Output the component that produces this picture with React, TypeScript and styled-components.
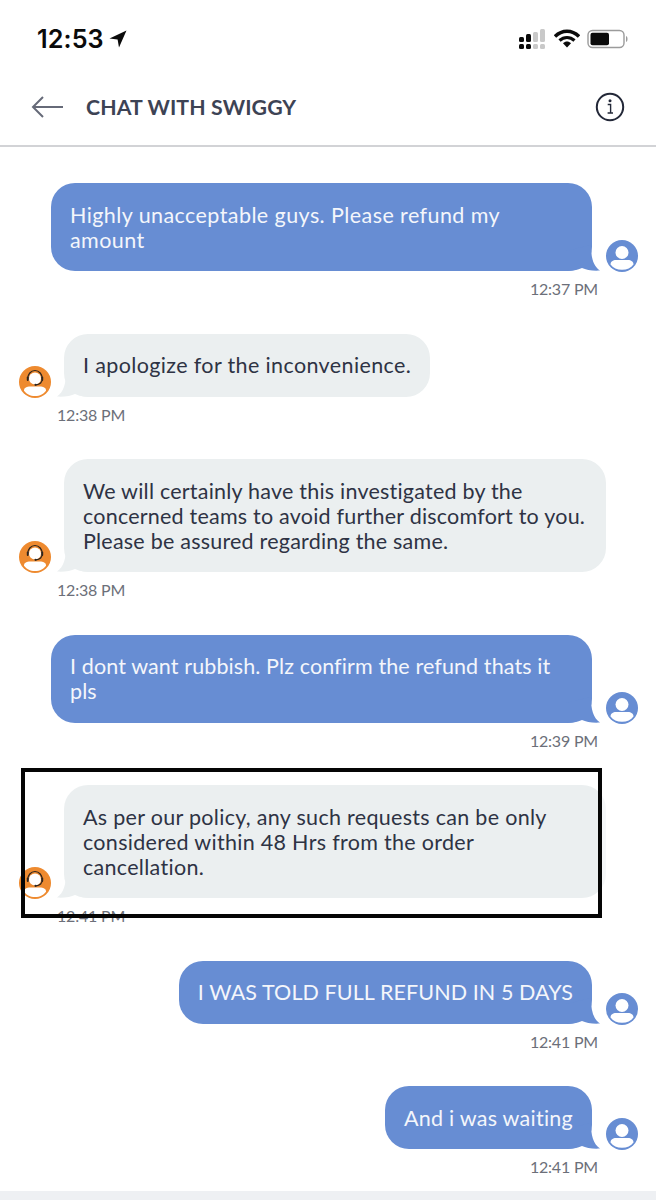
import React from "react";
import styled, { createGlobalStyle } from "styled-components";

const Global = createGlobalStyle`
  html, body { margin: 0; padding: 0; background: #fff; }
  body { font-family: Lato, "Noto Sans", sans-serif; color: #2e3344; }
  #root { width: 656px; height: 1200px; overflow: hidden; }
`;

const Page = styled.div`
  width: 656px;
  height: 1200px;
  display: flex;
  flex-direction: column;
  overflow: hidden;
  background: #fff;
`;

const StatusBar = styled.div`
  height: 76px;
  box-sizing: border-box;
  padding: 24px 27px 0 37px;
  display: flex;
  align-items: flex-start;
  justify-content: space-between;
`;

const Clock = styled.div`
  display: flex;
  align-items: center;
  gap: 5px;
  font-family: Inter, sans-serif;
  font-weight: 600;
  font-size: 25.2px;
  line-height: 30px;
  letter-spacing: 0.1px;
  color: #0b0b0b;
`;

const StatusIcons = styled.div`
  display: flex;
  align-items: center;
  gap: 7px;
  height: 30px;
`;

const Header = styled.header`
  height: 71px;
  box-sizing: border-box;
  border-bottom: 2px solid #d2d3d6;
  padding: 0 31px 8px 31px;
  display: flex;
  align-items: center;
`;

const Title = styled.h1`
  margin: 0 0 0 22px;
  flex: 1;
  font-size: 21.3px;
  font-weight: 700;
  color: #3d4354;
  letter-spacing: 0.1px;
`;

const Thread = styled.main`
  flex: 1;
  display: flex;
  flex-direction: column;
  gap: 35.5px;
  padding: 36px 18px 0 19px;
`;

const Message = styled.section<{ $mine?: boolean }>`
  position: relative;
  display: flex;
  flex-direction: column;
  align-items: ${(p) => (p.$mine ? "flex-end" : "flex-start")};
`;

const Row = styled.div<{ $mine?: boolean }>`
  display: flex;
  align-items: flex-end;
  flex-direction: ${(p) => (p.$mine ? "row" : "row-reverse")};
  gap: ${(p) => (p.$mine ? "14px" : "13px")};
`;

const Bubble = styled.div<{ $mine?: boolean; $boxed?: boolean; $tracking: number }>`
  position: relative;
  box-sizing: border-box;
  max-width: ${(p) => (p.$mine ? "541px" : "542px")};
  padding: 19.5px 19px 18.5px;
  border-radius: 24px;
  font-size: 21.5px;
  line-height: 25px;
  letter-spacing: ${(p) => p.$tracking}px;
  background: ${(p) =>
    p.$mine
      ? "#678dd3"
      : p.$boxed
      ? "linear-gradient(90deg, #ebeff0 calc(100% - 4px), #f5f7f8 0)"
      : "#ebeff0"};
  color: ${(p) => (p.$mine ? "#f4f6fb" : "#2e3344")};
`;

const BubbleText = styled.span`
  position: relative;
`;

const Tail = styled.svg<{ $mine?: boolean }>`
  position: absolute;
  bottom: 0;
  ${(p) => (p.$mine ? "right: -8px;" : "left: -7px; transform: scaleX(-1);")}
`;

const Time = styled.time<{ $mine?: boolean }>`
  display: block;
  font-size: 16px;
  line-height: 18px;
  letter-spacing: -0.2px;
  color: #6c6f79;
  margin-top: 9px;
  ${(p) => (p.$mine ? "margin-right: 40px;" : "margin-left: 38px;")}
`;

const Highlight = styled.div`
  position: absolute;
  box-sizing: border-box;
  left: 2px;
  top: -17px;
  width: 581px;
  height: 150px;
  border: 4px solid #050505;
  pointer-events: none;
`;

const BottomBar = styled.div`
  height: 9px;
  background: #eef0f3;
`;

const AvatarSvg = styled.svg`
  flex: none;
  margin-bottom: -1px;
`;

const UserAvatar = () => (
  <AvatarSvg width="32" height="32" viewBox="0 0 32 32">
    <circle cx="16" cy="16" r="16" fill="#678dd3" />
    <circle cx="16" cy="12.5" r="6.5" fill="#fff" />
    <path d="M4.5 24.5 C4.5 21.5 7 20 10 20 H22 C25 20 27.5 21.5 27.5 24.5 C25 28 21 29.7 16 29.7 C11 29.7 7 28 4.5 24.5 Z" fill="#fff" />
  </AvatarSvg>
);

const AgentAvatar = () => (
  <AvatarSvg width="32" height="32" viewBox="0 0 32 32">
    <circle cx="16" cy="16" r="16" fill="#ee8a2f" />
    <path d="M5 24.5 C5 21.5 8 20.5 11 20.5 H21 C24 20.5 27 21.5 27 24.5 C25 28 21 30 16 30 C11 30 7 28 5 24.5 Z" fill="#fff" />
    <circle cx="16" cy="12.5" r="6" fill="#fff" />
    <path d="M8.6 13 A7.4 8.5 0 0 1 23.4 13 C23.2 16 20.5 18.4 17 18.8" fill="none" stroke="#2a2420" strokeWidth="1.2" />
    <rect x="7.8" y="10.5" width="1.9" height="4.5" rx="0.9" fill="#2a2420" />
    <rect x="22.3" y="10.5" width="1.9" height="4.5" rx="0.9" fill="#2a2420" />
    <circle cx="16.5" cy="18.8" r="1.1" fill="#2a2420" />
  </AvatarSvg>
);

const BubbleTail = ({ mine }: { mine?: boolean }) => (
  <Tail $mine={mine} width="34" height="26" viewBox="0 0 34 26">
    <path
      d="M25 0 C25 12 27 21 34 25.5 C27 26 20 25 16 23 C12 25 6 26 0 26 L0 6 Z"
      fill={mine ? "#678dd3" : "#ebeff0"}
    />
  </Tail>
);

type Msg = { mine?: boolean; text: string; time: string; tracking: number; boxed?: boolean };

const messages: Msg[] = [
  { mine: true, tracking: 0.42, text: "Highly unacceptable guys. Please refund my amount", time: "12:37 PM" },
  { tracking: 0.37, text: "I apologize for the inconvenience.", time: "12:38 PM" },
  { tracking: 0.22, text: "We will certainly have this investigated by the concerned teams to avoid further discomfort to you. Please be assured regarding the same.", time: "12:38 PM" },
  { mine: true, tracking: 0.11, text: "I dont want rubbish. Plz confirm the refund thats it pls", time: "12:39 PM" },
  { tracking: 0.3, text: "As per our policy, any such requests can be only considered within 48 Hrs from the order cancellation.", time: "12:41 PM", boxed: true },
  { mine: true, tracking: 0.09, text: "I WAS TOLD FULL REFUND IN 5 DAYS", time: "12:41 PM" },
  { mine: true, tracking: 0.25, text: "And i was waiting", time: "12:41 PM" },
];

export default function App() {
  return (
    <Page>
      <Global />
      <StatusBar>
        <Clock>
          12:53
          <svg width="18" height="18" viewBox="0 0 18 18">
            <path d="M17.5 0.5 L0.5 8.5 L8.6 9.4 L10 17.5 Z" fill="#0b0b0b" />
          </svg>
        </Clock>
        <StatusIcons>
          <svg width="28" height="20" viewBox="0 0 28 20">
            <g fill="#0b0b0b">
              <rect x="0" y="8" width="5" height="5" rx="1.5" />
              <rect x="7" y="5" width="5" height="8" rx="1.5" />
              <rect x="0" y="15" width="5" height="5" rx="1.5" />
              <rect x="7" y="15" width="5" height="5" rx="1.5" />
            </g>
            <g fill="#c9c9c9">
              <rect x="14" y="3" width="5" height="10" rx="1.5" />
              <rect x="21" y="0" width="5" height="13" rx="1.5" />
              <rect x="14" y="15" width="5" height="5" rx="1.5" />
              <rect x="21" y="15" width="5" height="5" rx="1.5" />
            </g>
          </svg>
          <svg width="26" height="20" viewBox="0 0 26 20">
            <path d="M1 7.5 C8 0.5 18 0.5 25 7.5" fill="none" stroke="#0b0b0b" strokeWidth="3.4" />
            <path d="M5.5 11.5 C10 7.5 16 7.5 20.5 11.5" fill="none" stroke="#0b0b0b" strokeWidth="3.2" />
            <path d="M9 14.2 C11.5 12 14.5 12 17 14.2 L13 18.5 Z" fill="#0b0b0b" />
          </svg>
          <svg width="42" height="20" viewBox="0 0 42 20">
            <rect x="1" y="1.5" width="36" height="17" rx="4.5" fill="#fff" stroke="#9b9b9b" strokeWidth="1.4" />
            <rect x="3.5" y="3.7" width="18.5" height="12.6" rx="2" fill="#0b0b0b" />
            <path d="M39 7 C41 7.5 41 12.5 39 13 Z" fill="#9b9b9b" />
          </svg>
        </StatusIcons>
      </StatusBar>
      <Header>
        <svg width="33" height="22" viewBox="0 0 33 22">
          <path d="M32 11 H2 M12 1 L2 11 L12 21" fill="none" stroke="#666a78" strokeWidth="2" />
        </svg>
        <Title>CHAT WITH SWIGGY</Title>
        <svg width="30" height="30" viewBox="0 0 30 30">
          <circle cx="15" cy="15" r="13.2" fill="none" stroke="#232838" strokeWidth="2" />
          <circle cx="15" cy="8.8" r="1.5" fill="#232838" />
          <path d="M12.7 12.5 H15.6 V21 M12.6 21 H18" fill="none" stroke="#232838" strokeWidth="1.4" />
        </svg>
      </Header>
      <Thread>
        {messages.map((m, i) => (
          <Message key={i} $mine={m.mine}>
            <Row $mine={m.mine}>
              <Bubble $mine={m.mine} $boxed={m.boxed} $tracking={m.tracking}>
                <BubbleTail mine={m.mine} />
                <BubbleText>{m.text}</BubbleText>
              </Bubble>
              {m.mine ? <UserAvatar /> : <AgentAvatar />}
            </Row>
            <Time $mine={m.mine}>{m.time}</Time>
            {m.boxed && <Highlight />}
          </Message>
        ))}
      </Thread>
      <BottomBar />
    </Page>
  );
}
